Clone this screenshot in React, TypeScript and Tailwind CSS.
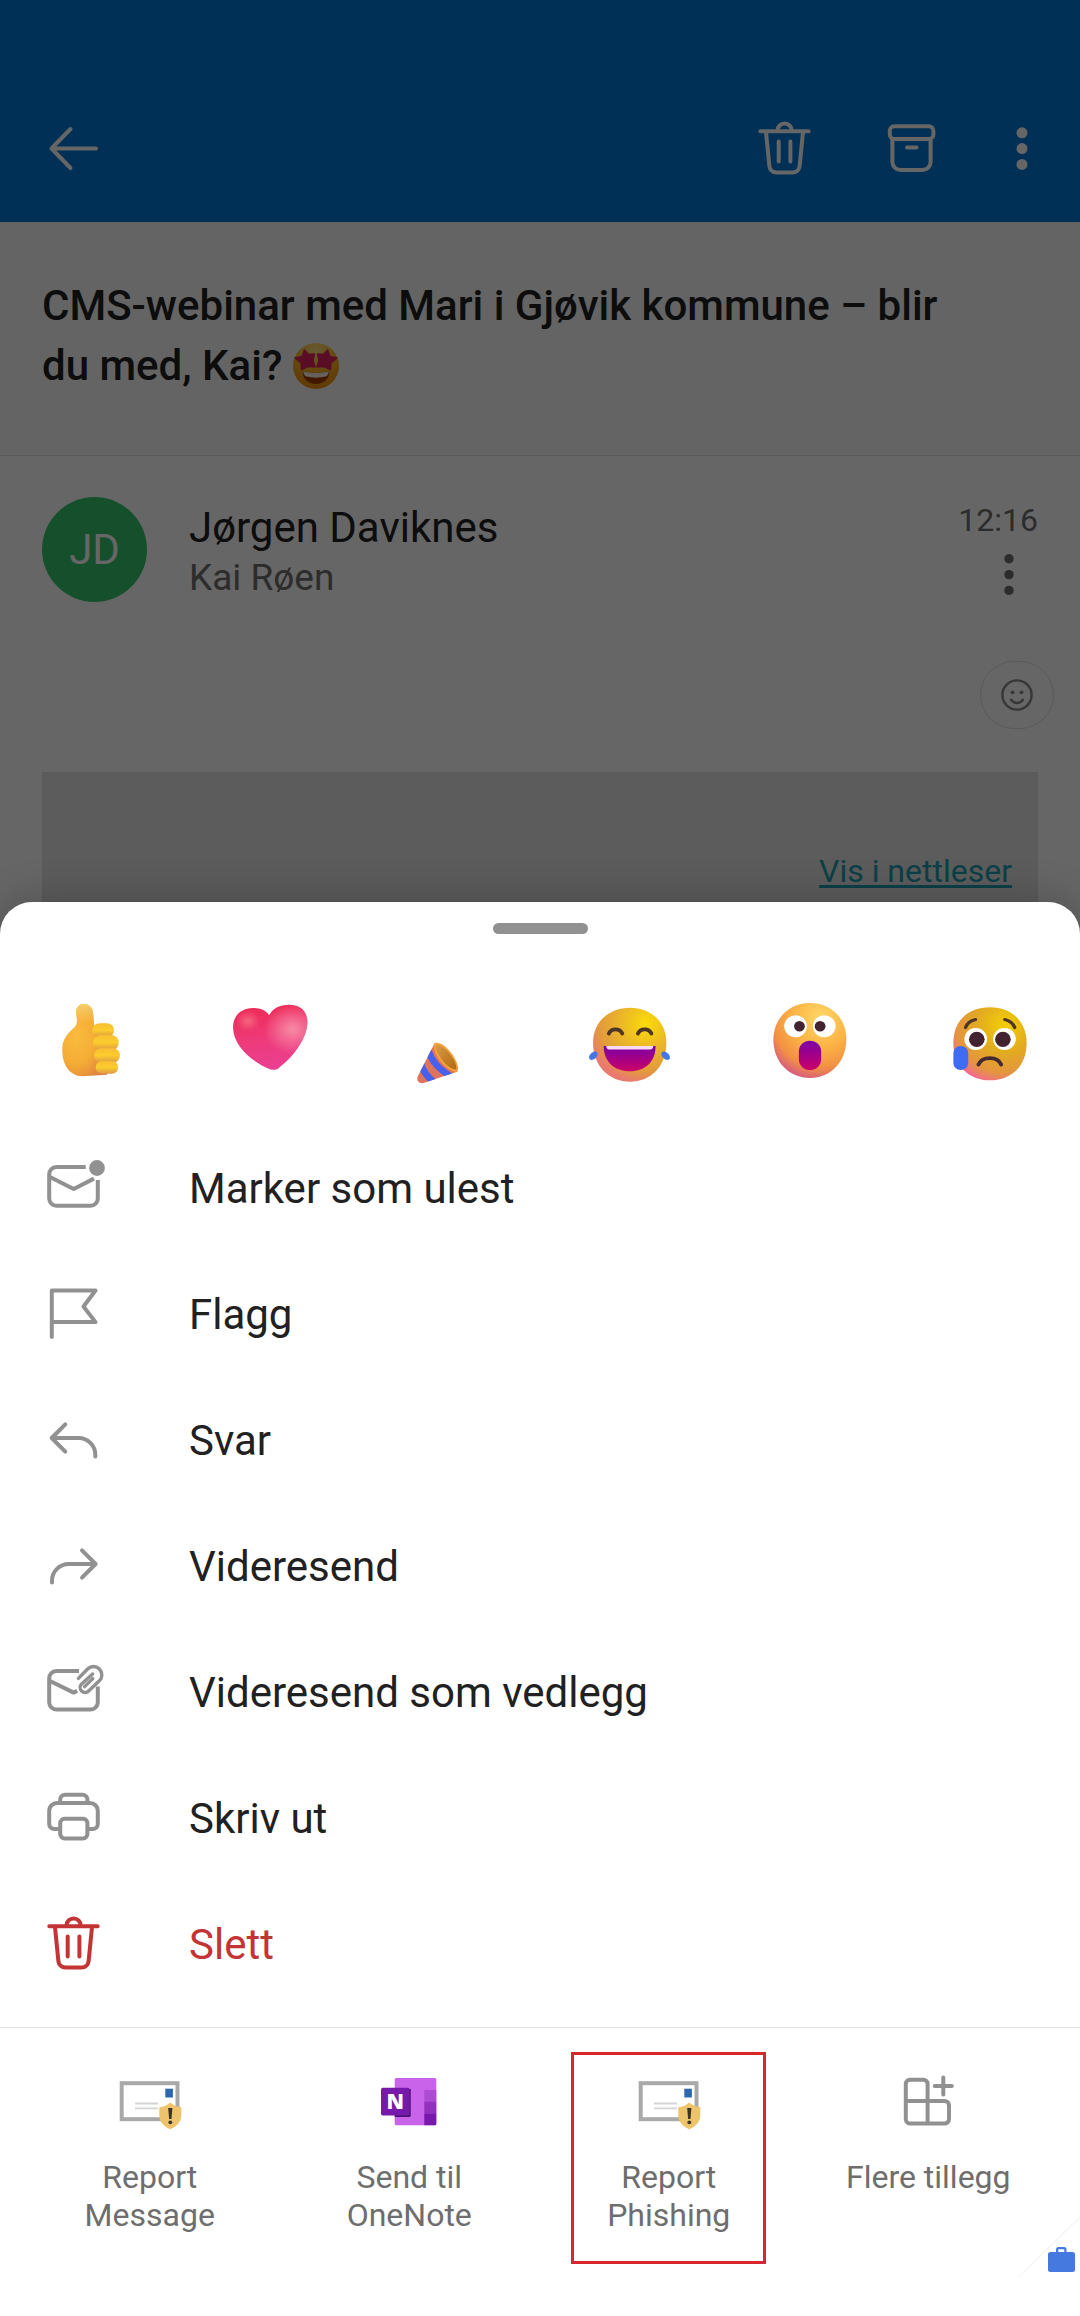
import React from "react";

type IconProps = { className?: string };

function LineIcon({
  children,
  className = "",
}: {
  children: React.ReactNode;
  className?: string;
}) {
  return (
    <svg
      viewBox="0 0 64 64"
      fill="none"
      stroke="currentColor"
      strokeWidth="4"
      strokeLinecap="round"
      strokeLinejoin="round"
      aria-hidden="true"
      className={`size-16 shrink-0 ${className}`}
    >
      {children}
    </svg>
  );
}

const BackIcon = () => (
  <LineIcon>
    <path d="M54 31.5H10M28.5 12L9.5 31.5L28.5 51" />
  </LineIcon>
);

const TrashIcon = ({ className }: IconProps) => (
  <LineIcon className={className}>
    <path d="M7.3 14.2H55.7M24.5 13.5a7.1 7.1 0 0 1 14.2 0M13 15l3.4 34.2a7 7 0 0 0 7 6.2h16.2a7 7 0 0 0 7-6.2L50 15M25.7 24.5v20M37.4 24.5v20" />
  </LineIcon>
);

const ArchiveIcon = () => (
  <LineIcon>
    <rect x="10.8" y="9.3" width="43.6" height="12.6" rx="4.5" />
    <path d="M13.4 22.5v22.4a8 8 0 0 0 8 8h22.2a8 8 0 0 0 8-8V22.5M28 30.5h9.5" />
  </LineIcon>
);

const UnreadIcon = () => (
  <LineIcon>
    <path
      strokeLinecap="butt"
      d="M43.7 11H14.4a7.2 7.2 0 0 0-7.2 7.2v24.4a7.2 7.2 0 0 0 7.2 7.2h34.2a7.2 7.2 0 0 0 7.2-7.2V24M7.5 20.8L31.7 33L52 22.6"
    />
    <circle cx="55" cy="12" r="7.9" fill="currentColor" stroke="none" />
  </LineIcon>
);

const FlagIcon = () => (
  <LineIcon>
    <path d="M9.8 55V8.5h43.7L41.5 24.5l12 15.6H9.8" />
  </LineIcon>
);

const ReplyIcon = () => (
  <LineIcon>
    <path d="M23.3 16.3L9.7 30l13.6 13.7M9.7 30H36.5a16.8 16.8 0 0 1 16.8 16.8v1.6" />
  </LineIcon>
);

const ForwardIcon = () => (
  <LineIcon>
    <path d="M40 16.3L53.6 30L40 43.7M53.6 30H26.8A16.8 16.8 0 0 0 10 46.8v1.6" />
  </LineIcon>
);

const ForwardAttachedIcon = () => (
  <LineIcon>
    <path
      strokeLinecap="butt"
      d="M37 11H14.4a7.2 7.2 0 0 0-7.2 7.2v24a7.2 7.2 0 0 0 7.2 7.2h34.2a7.2 7.2 0 0 0 7.2-7.2V26.5M7.5 20.8L31.7 32.6L35.2 30.8"
    />
    <path
      strokeWidth="3.4"
      d="M36.4 18.4L45.6 9a8.3 8.3 0 0 1 11.8 11.8L46.6 31a4.9 4.9 0 0 1-7-7l11-10M42.6 26.6l8.2-8"
    />
  </LineIcon>
);

const PrintIcon = () => (
  <LineIcon>
    <path d="M18.2 16v-2.4a4.8 4.8 0 0 1 4.8-4.8h17.6a4.8 4.8 0 0 1 4.8 4.8V16M17.5 43h-5.3a5 5 0 0 1-5-5V24.8a7.8 7.8 0 0 1 7.8-7.8h33a7.8 7.8 0 0 1 7.8 7.8V38a5 5 0 0 1-5 5h-5" />
    <rect x="18.2" y="32.8" width="27.2" height="19.6" rx="4.4" />
  </LineIcon>
);

const AddInsIcon = () => (
  <LineIcon>
    <path d="M31.6 31V14a4.2 4.2 0 0 0-4.2-4.2H14A4.2 4.2 0 0 0 9.8 14v35a4.6 4.6 0 0 0 4.6 4.6h34a4.6 4.6 0 0 0 4.6-4.6V35.4a4.4 4.4 0 0 0-4.4-4.4H9.8M31.6 31v22.6M47.3 7.5v17M38.8 16h17" />
  </LineIcon>
);

function ReportIcon() {
  return (
    <svg viewBox="0 0 64 64" aria-hidden="true" className="size-16">
      <rect x="3.7" y="13.2" width="55.8" height="36" fill="#fff" stroke="#a9a9a9" strokeWidth="4" />
      <rect x="47.3" y="18.7" width="7.6" height="8.8" fill="#2c68ad" />
      <path d="M17 33.5h23M17 38.3h23" stroke="#d4d4d4" strokeWidth="1.8" />
      <path
        d="M52.3 32.5c3 2.8 6.5 4.2 11 4.7v8c0 7-5 11.5-11 14c-6-2.500-11-7-11-14v-8c4.500-.5 8-1.900 11-4.700z"
        fill="#edc46c"
      />
      <path d="M50.2 38h4.2l-.9 11h-2.4z" fill="#3d3524" />
      <circle cx="52.3" cy="52.3" r="1.9" fill="#3d3524" />
    </svg>
  );
}

function OneNoteIcon() {
  return (
    <svg viewBox="0 0 64 64" aria-hidden="true" className="size-16">
      <rect x="17.7" y="8" width="41.6" height="47.3" rx="1.5" fill="#c964ea" />
      <path d="M47.3 20h12v11.6h-12z" fill="#ad4bd3" />
      <path d="M47.3 31.6h12v12h-12z" fill="#9131bd" />
      <path d="M47.3 43.5h12v10.3a1.5 1.5 0 0 1-1.5 1.5H47.3z" fill="#7719aa" />
      <path d="M17.7 45h14V19h2v26.6a1.5 1.5 0 0 1-1.5 1.5H17.7z" fill="#4b1070" />
      <rect x="4" y="17.7" width="28.5" height="27.8" rx="1.8" fill="#7719aa" />
      <text
        x="18.2"
        y="38.8"
        textAnchor="middle"
        fontSize="21"
        fill="#fff"
        className="font-[Open_Sans,sans-serif] font-extrabold"
      >
        N
      </text>
    </svg>
  );
}

function Dots({ className, r }: { className?: string; r: number }) {
  return (
    <svg viewBox="0 0 58 64" fill="currentColor" aria-hidden="true" className={className}>
      <circle cx="29" cy="15.8" r={r} />
      <circle cx="29" cy="31.6" r={r} />
      <circle cx="29" cy="47.4" r={r} />
    </svg>
  );
}

function StarStruck() {
  return (
    <svg viewBox="0 0 46 46" role="img" aria-label="🤩" className="inline-block size-[46px] align-[-9px]">
      <defs>
        <radialGradient id="starFace" cx="50%" cy="15%" r="90%">
          <stop offset="0" stopColor="#ffe07c" />
          <stop offset="0.45" stopColor="#fdba2a" />
          <stop offset="1" stopColor="#ee8a00" />
        </radialGradient>
      </defs>
      <circle cx="23" cy="23" r="23" fill="url(#starFace)" />
      <g fill="#e0245e" stroke="#e0245e" strokeWidth="1.5" strokeLinejoin="round">
        <path d="M11.5 7l4 4.500l6-.5l-1.500 6.500l2 6.500l-7-.5l-6.500 3l-.5-6.500L2 15l7-1.500z" />
        <path d="M34.5 7l-4 4.500l-6-.5l1.500 6.500l-2 6.500l7-.5l6.500 3l.5-6.500l6-5l-7-1.500z" />
      </g>
      <path d="M9.5 28c8 2.500 19 2.500 27 0c0 8-6 13-13.500 13S9.500 36 9.500 28z" fill="#a63a00" />
      <path d="M10 28.200c8 2.400 18 2.400 26 0c-.5 3.500-2 5-3.500 5.300c-6 1.500-13 1.500-19 0c-1.500-.3-3-1.800-3.500-5.300z" fill="#fff4e4" />
    </svg>
  );
}

function Emoji({ children, viewBox }: { children: React.ReactNode; viewBox: string }) {
  return (
    <svg
      viewBox={viewBox}
      preserveAspectRatio="none"
      aria-hidden="true"
      className="size-24 overflow-visible"
    >
      {children}
    </svg>
  );
}

const ThumbsUp = () => (
  <Emoji viewBox="-1 0 93 96">
    <defs>
      <radialGradient id="thumbPalm" cx="30%" cy="45%" r="70%">
        <stop offset="0" stopColor="#f9bc3e" />
        <stop offset="0.55" stopColor="#f5ac35" />
        <stop offset="1" stopColor="#de8040" />
      </radialGradient>
      <linearGradient id="thumbFinger" x1="0" y1="0" x2="0" y2="1">
        <stop offset="0" stopColor="#f9be33" />
        <stop offset="0.5" stopColor="#fccd2c" />
        <stop offset="1" stopColor="#dd9747" />
      </linearGradient>
      <linearGradient id="thumbTip" x1="0" y1="0" x2="0" y2="1">
        <stop offset="0" stopColor="#f7cf6c" />
        <stop offset="1" stopColor="#f7cf6c" stopOpacity="0" />
      </linearGradient>
    </defs>
    <path
      d="M39.700 12c-4.500 0-7.700 3.400-7.700 8c0 4 1.500 8 .5 11.500c-1 4-5 6-8.500 10.500c-3.500 4.500-5.400 9-5.400 15.500C18.600 73 26 84 38 84.200l24-1.500l3-45l-15.500-4c0-3.500-.5-8-1-13c-.5-4.500-4-8.700-8.800-8.700z"
      fill="url(#thumbPalm)"
    />
    <path
      d="M39.700 12c-4.500 0-7.700 3.400-7.700 8c0 4 1.500 8 .5 11.500h16.500c0-3.500-.5-8-.5-11.800c-.5-4.500-4-7.700-8.800-7.700z"
      fill="url(#thumbTip)"
    />
    <rect x="48" y="31.3" width="20.7" height="14" rx="6.5" fill="url(#thumbFinger)" />
    <rect x="48.5" y="43" width="24.8" height="15.500" rx="7.500" fill="url(#thumbFinger)" />
    <rect x="49.5" y="56.3" width="25" height="14.5" rx="7" fill="url(#thumbFinger)" />
    <rect x="51" y="69" width="21.700" height="12.800" rx="6" fill="url(#thumbFinger)" />
  </Emoji>
);

const Heart = () => (
  <Emoji viewBox="-7 0 93 96">
    <defs>
      <linearGradient id="heartBase" x1="0.3" y1="0" x2="0.5" y2="1">
        <stop offset="0" stopColor="#ef2a55" />
        <stop offset="0.5" stopColor="#ee3a78" />
        <stop offset="1" stopColor="#ea3f92" />
      </linearGradient>
      <radialGradient id="heartGlow" cx="80%" cy="38%" r="38%">
        <stop offset="0" stopColor="#f78ba6" />
        <stop offset="1" stopColor="#f78ba6" stopOpacity="0" />
      </radialGradient>
      <radialGradient id="heartSpot" cx="20%" cy="25%" r="16%">
        <stop offset="0" stopColor="#f5647f" />
        <stop offset="1" stopColor="#f5647f" stopOpacity="0" />
      </radialGradient>
    </defs>
    {["url(#heartBase)", "url(#heartGlow)", "url(#heartSpot)"].map((fill) => (
      <path
        key={fill}
        fill={fill}
        d="M38.700 23C35 18 30 16 23 16C12 16 3.700 23.500 3.700 35C3.700 54 22 70 39.500 77.200c2.800 1 5.400 1 8-.8C61 66 75.700 47 75.700 30C75.700 19 69 12.700 58 12.700c-9 0-15.500 3.500-19.300 10.300z"
      />
    ))}
  </Emoji>
);

const Party = () => (
  <Emoji viewBox="-13 0 93 96">
    <defs>
      <clipPath id="cone">
        <path d="M18.700 51L41 79.500L8 91c-4 1-7-2-6-6z" />
      </clipPath>
      <linearGradient id="coneInside" x1="0" y1="0" x2="1" y2="1">
        <stop offset="0" stopColor="#d99a45" />
        <stop offset="1" stopColor="#b06a10" />
      </linearGradient>
    </defs>
    <g clipPath="url(#cone)">
      <path d="M0 48h44v46H0z" fill="#e0735c" />
      <path d="M12.500 58c2 8 8 18 22 26.500M5 71c2 7 6 14 14 20" fill="none" stroke="#4661ee" strokeWidth="6.500" />
    </g>
    <path d="M18.700 51c5-1 11 3 16 10c5 7 8 14 6 18.500c-5 1-12-4-17-11s-7-14-5-17.500z" fill="#f5a13c" />
    <path d="M20 53c4-.5 9 3 13.500 9c4.500 6 7 12 6 15.500c-4 0-10-4-14-10s-6.500-11.500-5.500-14.500z" fill="url(#coneInside)" />
  </Emoji>
);

const Laugh = () => (
  <Emoji viewBox="-1 0 93 96">
    <defs>
      <radialGradient id="laughFace" cx="72%" cy="22%" r="80%">
        <stop offset="0" stopColor="#fbdc08" />
        <stop offset="0.45" stopColor="#eab52a" />
        <stop offset="0.8" stopColor="#e29a3c" />
        <stop offset="1" stopColor="#ea7a70" />
      </radialGradient>
      <linearGradient id="mouth" x1="0" y1="0" x2="0" y2="1">
        <stop offset="0" stopColor="#7a00a8" />
        <stop offset="1" stopColor="#cc0066" />
      </linearGradient>
    </defs>
    <path
      d="M45.500 15.700C66 15.700 80.700 30 80.700 50.500C80.700 74 66 89.700 45.500 89.700S9.700 74 9.700 50.500C9.700 30 25 15.700 45.500 15.700z"
      fill="url(#laughFace)"
    />
    <path
      d="M25 41.500c2.500-5.500 10.500-5.500 13 0M53.200 41.500c2.500-5.500 10.500-5.500 13 0"
      fill="none"
      stroke="#4d3527"
      strokeWidth="3.800"
      strokeLinecap="round"
    />
    <path d="M20 54h50.300c0 16-10.500 25.300-25 25.300S20 70 20 54z" fill="url(#mouth)" />
    <path d="M22.500 54h45.500c0 2.300-1 3.500-3 3.500H25.500c-2 0-3-1.200-3-3.500z" fill="#f9dcf4" />
    <ellipse cx="10" cy="63.700" rx="5" ry="3.200" transform="rotate(-45 10 63.700)" fill="#4377e8" />
    <ellipse cx="80" cy="63.700" rx="5" ry="3.200" transform="rotate(45 80 63.700)" fill="#4377e8" />
  </Emoji>
);

const Wow = () => (
  <Emoji viewBox="-7 0 93 96">
    <defs>
      <radialGradient id="wowFace" cx="65%" cy="20%" r="82%">
        <stop offset="0" stopColor="#ffd866" />
        <stop offset="0.5" stopColor="#fbb144" />
        <stop offset="0.8" stopColor="#f29143" />
        <stop offset="1" stopColor="#d9607a" />
      </radialGradient>
    </defs>
    <path
      d="M39.500 11C60 11 74.700 26 74.700 47.500S60 86 39.500 86S4 69.500 4 48S19 11 39.500 11z"
      fill="url(#wowFace)"
    />
    <g fill="#fff">
      <circle cx="25.500" cy="34.300" r="11" />
      <circle cx="53.300" cy="34.300" r="11" />
    </g>
    <g fill="#432330">
      <circle cx="29.300" cy="34.300" r="5.200" />
      <circle cx="49.300" cy="34.300" r="5.200" />
    </g>
    <rect x="28.700" y="48.700" width="21.600" height="29.400" rx="10.800" fill="url(#mouth)" />
  </Emoji>
);

const Sad = () => (
  <Emoji viewBox="-13 0 93 96">
    <defs>
      <radialGradient id="sadFace" cx="70%" cy="25%" r="82%">
        <stop offset="0" stopColor="#f3cf05" />
        <stop offset="0.45" stopColor="#e2ab20" />
        <stop offset="0.8" stopColor="#e4953f" />
        <stop offset="1" stopColor="#f46a90" />
      </radialGradient>
    </defs>
    <path
      d="M33.500 15.300C54 15.300 69 29 69 51C69 74 54 88.300 33.500 88.300S-2 74-2 51S13 15.300 33.500 15.300z"
      fill="url(#sadFace)"
    />
    <g fill="#fff">
      <circle cx="19.700" cy="47" r="11" />
      <circle cx="47.500" cy="47" r="11" />
    </g>
    <g fill="#432330">
      <circle cx="20.700" cy="47.300" r="7.600" />
      <circle cx="46" cy="47.300" r="7.600" />
    </g>
    <path
      d="M9.800 35.500c1.500-4 5-7 9.700-8M47.800 27.500c4.700 1 8 4 9.700 8"
      fill="none"
      stroke="#4d3527"
      strokeWidth="3.200"
      strokeLinecap="round"
    />
    <path d="M22.300 72.500c3.500-8.500 18.500-8.500 22 0" fill="none" stroke="#432a30" strokeWidth="3.800" strokeLinecap="round" />
    <rect x="-2" y="54" width="14.400" height="24" rx="7" fill="#3f6cf5" />
  </Emoji>
);

const reactions = [
  { label: "Liker", icon: ThumbsUp },
  { label: "Hjerte", icon: Heart },
  { label: "Feire", icon: Party },
  { label: "Latter", icon: Laugh },
  { label: "Overrasket", icon: Wow },
  { label: "Trist", icon: Sad },
];

const actions = [
  { label: "Marker som ulest", icon: UnreadIcon },
  { label: "Flagg", icon: FlagIcon },
  { label: "Svar", icon: ReplyIcon },
  { label: "Videresend", icon: ForwardIcon },
  { label: "Videresend som vedlegg", icon: ForwardAttachedIcon },
  { label: "Skriv ut", icon: PrintIcon },
  { label: "Slett", icon: TrashIcon, danger: true },
];

const addIns = [
  { label: "Report Message", icon: ReportIcon },
  { label: "Send til OneNote", icon: OneNoteIcon },
  { label: "Report Phishing", icon: ReportIcon, highlighted: true },
  { label: "Flere tillegg", icon: AddInsIcon },
];

function MailView() {
  return (
    <div>
      <header className="bg-[#0078d4] pt-[75px] text-white">
        <div className="flex h-[147px] items-center pl-[42px] pr-[10px]">
          <button aria-label="Tilbake">
            <BackIcon />
          </button>
          <button aria-label="Slett" className="ml-auto flex w-[126px] justify-center">
            <TrashIcon />
          </button>
          <button aria-label="Arkiver" className="flex w-[126px] justify-center">
            <ArchiveIcon />
          </button>
          <button aria-label="Flere valg" className="flex w-24 justify-center">
            <Dots r={5.5} className="h-16" />
          </button>
        </div>
      </header>

      <div className="border-b border-[#e0e0e0] bg-[#fafafa] pb-[59px] pl-[42px] pr-24 pt-[54px]">
        <h1 className="text-[42px] font-medium leading-[60px]">
          CMS-webinar med Mari i Gjøvik kommune – blir du med, Kai? <StarStruck />
        </h1>
      </div>

      <div className="flex gap-[42px] px-[42px] pt-[41px]">
        <div className="flex size-[105px] shrink-0 items-center justify-center rounded-full bg-[#37c66e] text-[42px] text-white">
          JD
        </div>
        <div className="grow pt-1.5">
          <p className="text-[42px] leading-[50px]">Jørgen Daviknes</p>
          <p className="text-[37px] leading-[50px] text-[#6e6e6e]">Kai Røen</p>
        </div>
        <div className="flex flex-col items-end gap-1 pt-1 text-[#6e6e6e]">
          <time className="text-[32px] leading-[38px]">12:16</time>
          <button aria-label="Flere valg for meldingen">
            <Dots r={4.7} className="h-16" />
          </button>
        </div>
      </div>

      <div className="flex justify-end px-[26px] pt-[54px]">
        <button
          aria-label="Legg til reaksjon"
          className="flex h-[68px] w-[74px] items-center justify-center rounded-full border border-[#e0e0e0] text-[#8a8a8a]"
        >
          <svg
            viewBox="0 0 32 32"
            fill="none"
            stroke="currentColor"
            strokeWidth="2.4"
            strokeLinecap="round"
            className="size-8"
          >
            <circle cx="16" cy="16" r="14.6" />
            <path d="M10 20.8c3 4.2 9 4.2 12 0" />
            <circle cx="11.5" cy="13.3" r="1.9" fill="currentColor" stroke="none" />
            <circle cx="20.5" cy="13.3" r="1.9" fill="currentColor" stroke="none" />
          </svg>
        </button>
      </div>

      <div className="mx-[42px] mt-[43px] flex h-96 justify-end bg-[#e6e6e6] pr-[26px] pt-20">
        <a
          href="#nettleser"
          className="text-[32px] leading-[38px] text-[#1e9db1] underline decoration-[3px] underline-offset-[3px]"
        >
          Vis i nettleser
        </a>
      </div>
    </div>
  );
}

function ActionSheet() {
  return (
    <div
      role="dialog"
      aria-label="Meldingshandlinger"
      className="rounded-t-[32px] bg-white shadow-[0_-4px_40px_rgba(0,0,0,0.2)]"
    >
      <div className="flex justify-center pt-[21px]">
        <div className="h-[11px] w-[95px] rounded-full bg-[#919191]" />
      </div>

      <div className="grid grid-cols-6 pb-[37px] pt-[58px]">
        {reactions.map(({ label, icon: Icon }) => (
          <button key={label} aria-label={label} className="flex justify-center">
            <Icon />
          </button>
        ))}
      </div>

      <ul className="border-b border-[#e0e0e0] pb-5">
        {actions.map(({ label, icon: Icon, danger }) => (
          <li key={label}>
            <button
              className={`flex h-[126px] w-full items-center gap-[83px] px-[42px] text-left text-[42px] ${
                danger ? "text-[#c53434]" : "text-[#212121]"
              }`}
            >
              <span className={danger ? "" : "text-[#919191]"}>
                <Icon />
              </span>
              {label}
            </button>
          </li>
        ))}
      </ul>

      <div className="grid grid-cols-4 justify-items-center pb-[52px] pl-5 pr-[22px] pt-6">
        {addIns.map(({ label, icon: Icon, highlighted }) => (
          <button
            key={label}
            className={`flex h-[212px] w-[195px] flex-col items-center gap-6 border-[3px] pt-[15px] text-[32px] leading-[38px] text-[#6e6e6e] ${
              highlighted ? "border-[#d9252c]" : "border-transparent"
            }`}
          >
            <span className="text-[#919191]">
              <Icon />
            </span>
            {label}
          </button>
        ))}
      </div>
    </div>
  );
}

function App() {
  return (
    <div className="relative min-h-screen overflow-hidden bg-white font-[Roboto,sans-serif] text-[#212121]">
      <MailView />
      <div className="absolute inset-0 flex flex-col justify-end bg-black/60">
        <ActionSheet />
      </div>

      {/* Work profile badge */}
      <svg viewBox="0 0 63 63" aria-label="Jobbprofil" role="img" className="absolute bottom-[39px] right-0 size-[63px]">
        <path d="M2 63L63 3" stroke="#f5f5f5" strokeWidth="1.5" />
        <path
          d="M33.500 38h5.500v-2.500a2.500 2.500 0 0 1 2.500-2.500h5.500a2.500 2.500 0 0 1 2.500 2.500V38h6a2.500 2.500 0 0 1 2.500 2.500v15a2.500 2.500 0 0 1-2.500 2.500h-22a2.500 2.500 0 0 1-2.500-2.500v-15a2.500 2.500 0 0 1 2.500-2.500zM41.300 35.300V38h6v-2.700z"
          fill="#4679e0"
          fillRule="evenodd"
        />
      </svg>
    </div>
  );
}

export default App;
